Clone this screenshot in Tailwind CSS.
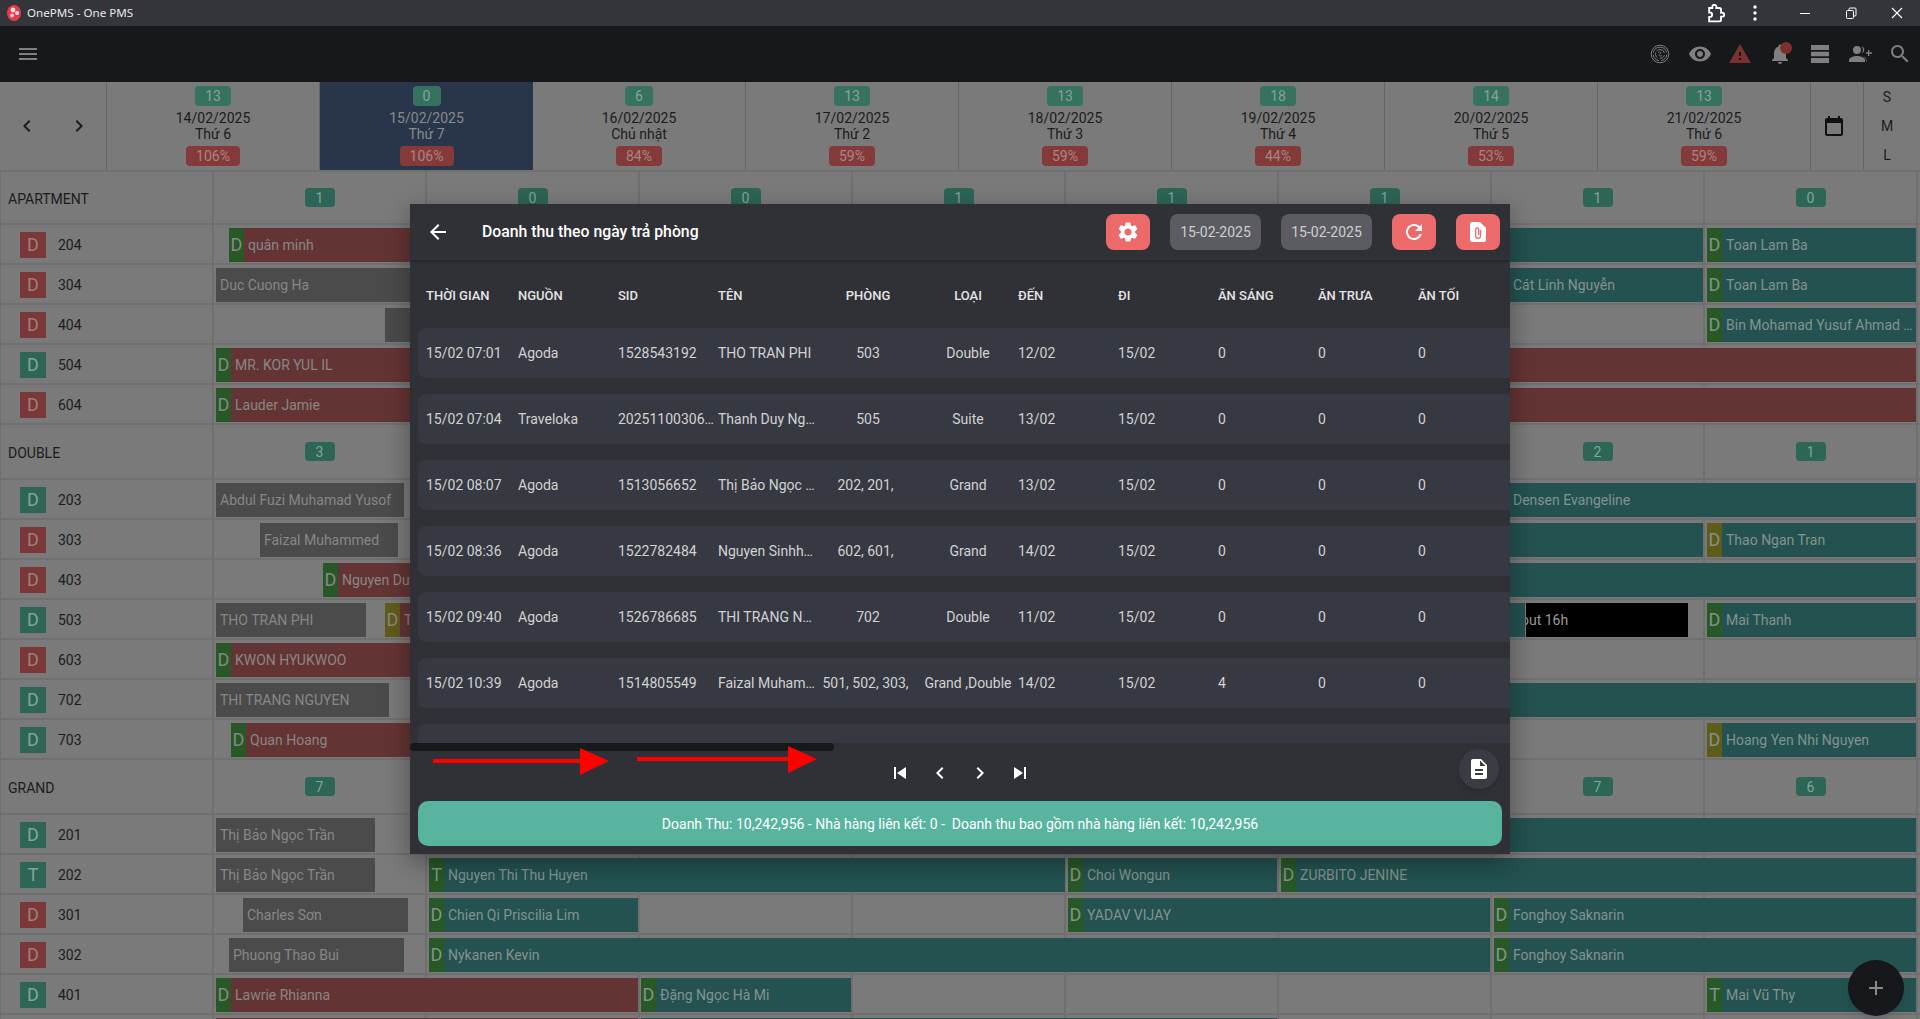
<!DOCTYPE html>
<html lang="vi">
<head>
<meta charset="utf-8">
<title>OnePMS - One PMS</title>
<script src="https://cdn.jsdelivr.net/npm/@tailwindcss/browser@4"></script>
</head>
<body class="m-0 bg-[#7a7a7a]">
<div class="relative w-[1920px] h-[1019px] overflow-hidden font-[Roboto,sans-serif] text-sm text-[#1c1c1c]">

  <!-- Title bar -->
  <div class="h-[26px] bg-[#33353b] flex items-center text-white">
    <svg class="ml-[7px] w-[14px] h-[16px]" viewBox="0 0 14 16"><ellipse cx="7" cy="8" rx="7" ry="8" fill="#e63950"/><circle cx="6" cy="5" r="2.400" fill="#fbd5db"/><circle cx="10" cy="8" r="2" fill="#fde8eb"/><circle cx="5" cy="10.500" r="2" fill="#f9c6cf"/></svg>
    <span class="ml-[6px] text-[11.6px] font-['Noto_Sans',sans-serif] text-[#e8e8e8]">OnePMS - One PMS</span>
    <svg class="absolute left-[1706px] top-[4px] w-[19px] h-[19px]" viewBox="0 0 24 24" fill="none" stroke="#fff" stroke-width="2.400"><path d="M20.500 11H19V7c0-1.100-.9-2-2-2h-4V3.500C13 2.120 11.880 1 10.500 1S8 2.120 8 3.500V5H4v5.800h1c1.490 0 2.700 1.210 2.700 2.700S6.490 16.200 5 16.200H4V22h13c1.100 0 2-.9 2-2v-4h1.500c1.380 0 2.500-1.120 2.500-2.500S21.880 11 20.500 11z"/></svg>
    <svg class="absolute left-[1745px] top-[3px] w-[20px] h-[20px]" viewBox="0 0 20 20" fill="#fff"><circle cx="10" cy="4" r="1.700"/><circle cx="10" cy="10" r="1.700"/><circle cx="10" cy="16" r="1.700"/></svg>
    <svg class="absolute left-[1795px] top-[3px] w-[20px] h-[20px]" viewBox="0 0 20 20" stroke="#fff" stroke-width="1"><path d="M5 10.500h10"/></svg>
    <svg class="absolute left-[1841px] top-[3px] w-[20px] h-[20px]" viewBox="0 0 20 20" stroke="#fff" stroke-width="1" fill="none"><rect x="5.500" y="7.500" width="7" height="8" rx="1"/><path d="M8 7.500V6a1 1 0 0 1 1-1h5a1 1 0 0 1 1 1v6a1 1 0 0 1-1 1h-1.500"/></svg>
    <svg class="absolute left-[1887px] top-[3px] w-[20px] h-[20px]" viewBox="0 0 20 20" stroke="#fff" stroke-width="1.100"><path d="M5 5l10 10M15 5L5 15"/></svg>
  </div>

  <!-- App bar -->
  <div class="h-14 bg-[#17181b] flex items-center justify-between pl-4 pr-2 text-[#7f7f7f]">
    <svg class="w-6 h-6" viewBox="0 0 24 24" fill="#7f7f7f"><path d="M3 18h18v-2H3v2zm0-5h18v-2H3v2zm0-7v2h18V6H3z"/></svg>
    <div class="flex items-center gap-4">
      <svg class="w-6 h-6" viewBox="0 0 24 24" fill="none" stroke="#7f7f7f" stroke-width="1"><circle cx="12" cy="12" r="8.800"/><path stroke-dasharray="9 2" d="M12 5.200a6.800 6.800 0 1 1-.01 0z"/><path stroke-dasharray="6 2" d="M12 7.500a4.500 4.500 0 1 1-.01 0z"/><path d="M10 10.500c2-1.500 4 0 2 1.500s0 3 2 1.500"/></svg>
      <svg class="w-6 h-6" viewBox="0 0 24 24" fill="#7f7f7f"><path d="M12 4.500C7 4.500 2.730 7.610 1 12c1.730 4.390 6 7.500 11 7.500s9.270-3.110 11-7.500c-1.730-4.390-6-7.500-11-7.500zM12 17c-2.760 0-5-2.240-5-5s2.240-5 5-5 5 2.240 5 5-2.240 5-5 5zm0-8c-1.660 0-3 1.340-3 3s1.340 3 3 3 3-1.340 3-3-1.340-3-3-3z"/></svg>
      <svg class="w-6 h-6" viewBox="0 0 24 24" fill="#7c3030"><path d="M1 21h22L12 2 1 21zm12-3h-2v-2h2v2zm0-4h-2v-4h2v4z"/></svg>
      <div class="relative w-6 h-6">
        <svg class="w-6 h-6" viewBox="0 0 24 24" fill="#7f7f7f"><path d="M12 22c1.100 0 2-.9 2-2h-4c0 1.100.89 2 2 2zm6-6v-5c0-3.070-1.640-5.640-4.500-6.320V4c0-.83-.67-1.500-1.500-1.500s-1.500.67-1.500 1.500v.68C7.630 5.360 6 7.920 6 11v5l-2 2v1h16v-1l-2-2z"/></svg>
        <span class="absolute left-[12px] top-0 w-3 h-3 rounded-full bg-[#7c3030]"></span>
      </div>
      <svg class="w-6 h-6" viewBox="0 0 24 24" fill="#7f7f7f"><path d="M3 3h18v5H3zM3 9.800h18v4.400H3zM3 16h18v5H3z"/></svg>
      <svg class="w-6 h-6" viewBox="0 0 24 24" fill="#7f7f7f"><circle cx="9" cy="8" r="4"/><path d="M1 20v-2c0-2.700 5.300-4 8-4s8 1.300 8 4v2z"/><path d="M13.500 4.200a4 4 0 0 1 0 7.600A6 6 0 0 0 13.500 4.200zM15 14.200c2 .6 3.500 1.800 3.500 3.800v2H18v-2c0-1.500-1.300-2.900-3-3.800z"/><path d="M20 8h1.400v2.300H24v1.400h-2.600V14H20v-2.300h-2v-1.400h2z"/></svg>
      <svg class="w-6 h-6" viewBox="0 0 24 24" fill="#7f7f7f"><path d="M15.500 14h-.79l-.28-.27C15.410 12.590 16 11.110 16 9.500 16 5.910 13.090 3 9.500 3S3 5.910 3 9.500 5.910 16 9.500 16c1.610 0 3.090-.59 4.230-1.570l.27.28v.79l5 4.990L20.490 19l-4.990-5zm-6 0C7.010 14 5 11.990 5 9.500S7.010 5 9.500 5 14 7.010 14 9.500 11.990 14 9.500 14z"/></svg>
    </div>
  </div>

  <!-- Date header -->
  <div class="h-[88px] grid grid-cols-[107px_repeat(8,213px)_53px_1fr] leading-4 bg-[#7a7a7a]">
    <div class="flex items-center justify-between px-[15px] border-r border-[#646464]">
      <svg class="w-6 h-6" viewBox="0 0 24 24" fill="#1c1c1c"><path d="M15.410 7.410L14 6l-6 6 6 6 1.410-1.410L10.830 12z"/></svg>
      <svg class="w-6 h-6" viewBox="0 0 24 24" fill="#1c1c1c"><path d="M10 6L8.590 7.410 13.170 12l-4.580 4.590L10 18l6-6z"/></svg>
    </div>
    <div class="flex flex-col items-center pt-1 border-r border-[#646464]"><span class="w-9 h-5 rounded bg-[#35725f] text-[#83a59a] flex items-center justify-center">13</span><span class="mt-[4px]">14/02/2025</span><span>Thứ 6</span><span class="mt-[4px] w-[54px] h-5 rounded bg-[#853a3a] text-[#a98585] flex items-center justify-center">106%</span></div>
    <div class="flex flex-col items-center pt-1 bg-[#28354a] text-[#8a8a8a]"><span class="w-7 h-5 rounded bg-[#35725f] text-[#83a59a] flex items-center justify-center">0</span><span class="mt-[4px]">15/02/2025</span><span>Thứ 7</span><span class="mt-[4px] w-[54px] h-5 rounded bg-[#853a3a] text-[#a98585] flex items-center justify-center">106%</span></div>
    <div class="flex flex-col items-center pt-1 border-r border-[#646464]"><span class="w-7 h-5 rounded bg-[#35725f] text-[#83a59a] flex items-center justify-center">6</span><span class="mt-[4px]">16/02/2025</span><span>Chủ nhật</span><span class="mt-[4px] w-[46px] h-5 rounded bg-[#853a3a] text-[#a98585] flex items-center justify-center">84%</span></div>
    <div class="flex flex-col items-center pt-1 border-r border-[#646464]"><span class="w-9 h-5 rounded bg-[#35725f] text-[#83a59a] flex items-center justify-center">13</span><span class="mt-[4px]">17/02/2025</span><span>Thứ 2</span><span class="mt-[4px] w-[46px] h-5 rounded bg-[#853a3a] text-[#a98585] flex items-center justify-center">59%</span></div>
    <div class="flex flex-col items-center pt-1 border-r border-[#646464]"><span class="w-9 h-5 rounded bg-[#35725f] text-[#83a59a] flex items-center justify-center">13</span><span class="mt-[4px]">18/02/2025</span><span>Thứ 3</span><span class="mt-[4px] w-[46px] h-5 rounded bg-[#853a3a] text-[#a98585] flex items-center justify-center">59%</span></div>
    <div class="flex flex-col items-center pt-1 border-r border-[#646464]"><span class="w-9 h-5 rounded bg-[#35725f] text-[#83a59a] flex items-center justify-center">18</span><span class="mt-[4px]">19/02/2025</span><span>Thứ 4</span><span class="mt-[4px] w-[46px] h-5 rounded bg-[#853a3a] text-[#a98585] flex items-center justify-center">44%</span></div>
    <div class="flex flex-col items-center pt-1 border-r border-[#646464]"><span class="w-9 h-5 rounded bg-[#35725f] text-[#83a59a] flex items-center justify-center">14</span><span class="mt-[4px]">20/02/2025</span><span>Thứ 5</span><span class="mt-[4px] w-[46px] h-5 rounded bg-[#853a3a] text-[#a98585] flex items-center justify-center">53%</span></div>
    <div class="flex flex-col items-center pt-1 border-r border-[#646464]"><span class="w-9 h-5 rounded bg-[#35725f] text-[#83a59a] flex items-center justify-center">13</span><span class="mt-[4px]">21/02/2025</span><span>Thứ 6</span><span class="mt-[4px] w-[46px] h-5 rounded bg-[#853a3a] text-[#a98585] flex items-center justify-center">59%</span></div>
    <div class="flex items-center pl-[11px] border-r border-[#646464]"><svg class="w-6 h-6" viewBox="0 0 24 24" fill="#111"><path d="M19 4h-1V2h-2v2H8V2H6v2H5c-1.110 0-2 .9-2 2v14c0 1.100.89 2 2 2h14c1.100 0 2-.9 2-2V6c0-1.100-.9-2-2-2zm0 16H5V9h14v11z"/></svg></div>
    <div class="flex flex-col items-center justify-between py-[7px] pr-[10px]"><span>S</span><span>M</span><span>L</span></div>
  </div>

  <!-- APARTMENT -->
  <div class="h-[55px] grid grid-cols-[213px_repeat(8,213px)] items-center border-t-2 border-b-2 border-[#707070] bg-[repeating-linear-gradient(90deg,#6f6f6f_0,#6f6f6f_1px,#7a7a7a_1px,#7a7a7a_212px,#6f6f6f_212px,#6f6f6f_213px)]">
    <span class="pl-2 pt-[2px]">APARTMENT</span>
    <span class="justify-self-center w-[30px] h-[19px] rounded bg-[#2d6557] text-[#83a59a] flex items-center justify-center">1</span><span class="justify-self-center w-[30px] h-[19px] rounded bg-[#2d6557] text-[#83a59a] flex items-center justify-center">0</span><span class="justify-self-center w-[30px] h-[19px] rounded bg-[#2d6557] text-[#83a59a] flex items-center justify-center">0</span><span class="justify-self-center w-[30px] h-[19px] rounded bg-[#2d6557] text-[#83a59a] flex items-center justify-center">1</span><span class="justify-self-center w-[30px] h-[19px] rounded bg-[#2d6557] text-[#83a59a] flex items-center justify-center">1</span><span class="justify-self-center w-[30px] h-[19px] rounded bg-[#2d6557] text-[#83a59a] flex items-center justify-center">1</span><span class="justify-self-center w-[30px] h-[19px] rounded bg-[#2d6557] text-[#83a59a] flex items-center justify-center">1</span><span class="justify-self-center w-[30px] h-[19px] rounded bg-[#2d6557] text-[#83a59a] flex items-center justify-center">0</span>
  </div>

  <!-- 204 -->
  <div class="relative h-10 pt-[2px] flex items-center pl-5 gap-3 border-b-2 border-[#707070] bg-[repeating-linear-gradient(90deg,#6f6f6f_0,#6f6f6f_1px,#7a7a7a_1px,#7a7a7a_212px,#6f6f6f_212px,#6f6f6f_213px)]">
    <span class="w-[26px] h-[26px] bg-[#7a3838] text-[#9c7f7f] text-lg flex items-center justify-center">D</span><span>204</span>
    <div class="absolute top-[3px] h-[34px] left-[229px] w-[400px] bg-[#643434] flex items-center overflow-hidden text-[#878787]"><span class="w-[15px] h-full bg-[#285826] flex items-center justify-center text-lg">D</span><span class="pl-1 whitespace-nowrap">quân minh</span></div>
    <div class="absolute top-[3px] h-[34px] left-[1400px] w-[303px] bg-[#235250]"></div>
    <div class="absolute top-[3px] h-[34px] left-[1707px] w-[209px] bg-[#235250] flex items-center overflow-hidden text-[#83928f]"><span class="w-[15px] h-full bg-[#285826] flex items-center justify-center text-lg">D</span><span class="pl-1 whitespace-nowrap">Toan Lam Ba</span></div>
  </div>
  <!-- 304 -->
  <div class="relative h-10 pt-[2px] flex items-center pl-5 gap-3 border-b-2 border-[#707070] bg-[repeating-linear-gradient(90deg,#6f6f6f_0,#6f6f6f_1px,#7a7a7a_1px,#7a7a7a_212px,#6f6f6f_212px,#6f6f6f_213px)]">
    <span class="w-[26px] h-[26px] bg-[#7a3838] text-[#9c7f7f] text-lg flex items-center justify-center">D</span><span>304</span>
    <div class="absolute top-[3px] h-[34px] left-[216px] w-[300px] bg-[#4b4b4b] flex items-center overflow-hidden text-[#878787]"><span class="pl-1 whitespace-nowrap">Duc Cuong Ha</span></div>
    <div class="absolute top-[3px] h-[34px] left-[1494px] w-[209px] bg-[#235250] flex items-center overflow-hidden text-[#83928f]"><span class="w-[15px] h-full bg-[#285826]"></span><span class="pl-1 whitespace-nowrap">Cát Linh Nguyễn</span></div>
    <div class="absolute top-[3px] h-[34px] left-[1707px] w-[209px] bg-[#235250] flex items-center overflow-hidden text-[#83928f]"><span class="w-[15px] h-full bg-[#285826] flex items-center justify-center text-lg">D</span><span class="pl-1 whitespace-nowrap">Toan Lam Ba</span></div>
  </div>
  <!-- 404 -->
  <div class="relative h-10 pt-[2px] flex items-center pl-5 gap-3 border-b-2 border-[#707070] bg-[repeating-linear-gradient(90deg,#6f6f6f_0,#6f6f6f_1px,#7a7a7a_1px,#7a7a7a_212px,#6f6f6f_212px,#6f6f6f_213px)]">
    <span class="w-[26px] h-[26px] bg-[#7a3838] text-[#9c7f7f] text-lg flex items-center justify-center">D</span><span>404</span>
    <div class="absolute top-[3px] h-[34px] left-[385px] w-[100px] bg-[#4b4b4b]"></div>
    <div class="absolute top-[3px] h-[34px] left-[1707px] w-[209px] bg-[#235250] flex items-center overflow-hidden text-[#83928f]"><span class="w-[15px] h-full shrink-0 bg-[#285826] flex items-center justify-center text-lg">D</span><span class="pl-1 pr-[3px] whitespace-nowrap">Bin Mohamad Yusuf Ahmad …</span></div>
  </div>
  <!-- 504 -->
  <div class="relative h-10 pt-[2px] flex items-center pl-5 gap-3 border-b-2 border-[#707070] bg-[repeating-linear-gradient(90deg,#6f6f6f_0,#6f6f6f_1px,#7a7a7a_1px,#7a7a7a_212px,#6f6f6f_212px,#6f6f6f_213px)]">
    <span class="w-[26px] h-[26px] bg-[#2d6557] text-[#83a59a] text-lg flex items-center justify-center">D</span><span>504</span>
    <div class="absolute top-[3px] h-[34px] left-[216px] w-[1700px] bg-[#643434] flex items-center overflow-hidden text-[#878787]"><span class="w-[15px] h-full bg-[#285826] flex items-center justify-center text-lg">D</span><span class="pl-1 whitespace-nowrap">MR. KOR YUL IL</span></div>
  </div>
  <!-- 604 -->
  <div class="relative h-10 pt-[2px] flex items-center pl-5 gap-3 border-b-2 border-[#707070] bg-[repeating-linear-gradient(90deg,#6f6f6f_0,#6f6f6f_1px,#7a7a7a_1px,#7a7a7a_212px,#6f6f6f_212px,#6f6f6f_213px)]">
    <span class="w-[26px] h-[26px] bg-[#7a3838] text-[#9c7f7f] text-lg flex items-center justify-center">D</span><span>604</span>
    <div class="absolute top-[3px] h-[34px] left-[216px] w-[1700px] bg-[#643434] flex items-center overflow-hidden text-[#878787]"><span class="w-[15px] h-full bg-[#285826] flex items-center justify-center text-lg">D</span><span class="pl-1 whitespace-nowrap">Lauder Jamie</span></div>
  </div>

  <!-- DOUBLE -->
  <div class="h-[55px] grid grid-cols-[213px_repeat(8,213px)] items-center border-b-2 border-[#707070] bg-[repeating-linear-gradient(90deg,#6f6f6f_0,#6f6f6f_1px,#7a7a7a_1px,#7a7a7a_212px,#6f6f6f_212px,#6f6f6f_213px)]">
    <span class="pl-2 pt-[2px]">DOUBLE</span>
    <span class="justify-self-center w-[30px] h-[19px] rounded bg-[#2d6557] text-[#83a59a] flex items-center justify-center">3</span><span></span><span></span><span></span><span></span><span></span><span class="justify-self-center w-[30px] h-[19px] rounded bg-[#2d6557] text-[#83a59a] flex items-center justify-center">2</span><span class="justify-self-center w-[30px] h-[19px] rounded bg-[#2d6557] text-[#83a59a] flex items-center justify-center">1</span>
  </div>

  <!-- 203 -->
  <div class="relative h-10 pt-[2px] flex items-center pl-5 gap-3 border-b-2 border-[#707070] bg-[repeating-linear-gradient(90deg,#6f6f6f_0,#6f6f6f_1px,#7a7a7a_1px,#7a7a7a_212px,#6f6f6f_212px,#6f6f6f_213px)]">
    <span class="w-[26px] h-[26px] bg-[#2d6557] text-[#83a59a] text-lg flex items-center justify-center">D</span><span>203</span>
    <div class="absolute top-[3px] h-[34px] left-[216px] w-[188px] bg-[#4b4b4b] flex items-center overflow-hidden text-[#878787]"><span class="pl-1 whitespace-nowrap">Abdul Fuzi Muhamad Yusof</span></div>
    <div class="absolute top-[3px] h-[34px] left-[1494px] w-[422px] bg-[#235250] flex items-center overflow-hidden text-[#83928f]"><span class="w-[15px] h-full bg-[#285826]"></span><span class="pl-1 whitespace-nowrap">Densen Evangeline</span></div>
  </div>
  <!-- 303 -->
  <div class="relative h-10 pt-[2px] flex items-center pl-5 gap-3 border-b-2 border-[#707070] bg-[repeating-linear-gradient(90deg,#6f6f6f_0,#6f6f6f_1px,#7a7a7a_1px,#7a7a7a_212px,#6f6f6f_212px,#6f6f6f_213px)]">
    <span class="w-[26px] h-[26px] bg-[#7a3838] text-[#9c7f7f] text-lg flex items-center justify-center">D</span><span>303</span>
    <div class="absolute top-[3px] h-[34px] left-[260px] w-[138px] bg-[#4b4b4b] flex items-center overflow-hidden text-[#878787]"><span class="pl-1 whitespace-nowrap">Faizal Muhammed</span></div>
    <div class="absolute top-[3px] h-[34px] left-[1400px] w-[303px] bg-[#235250]"></div>
    <div class="absolute top-[3px] h-[34px] left-[1707px] w-[209px] bg-[#235250] flex items-center overflow-hidden text-[#83928f]"><span class="w-[15px] h-full bg-[#5f5c1a] flex items-center justify-center text-lg">D</span><span class="pl-1 whitespace-nowrap">Thao Ngan Tran</span></div>
  </div>
  <!-- 403 -->
  <div class="relative h-10 pt-[2px] flex items-center pl-5 gap-3 border-b-2 border-[#707070] bg-[repeating-linear-gradient(90deg,#6f6f6f_0,#6f6f6f_1px,#7a7a7a_1px,#7a7a7a_212px,#6f6f6f_212px,#6f6f6f_213px)]">
    <span class="w-[26px] h-[26px] bg-[#7a3838] text-[#9c7f7f] text-lg flex items-center justify-center">D</span><span>403</span>
    <div class="absolute top-[3px] h-[34px] left-[323px] w-[300px] bg-[#643434] flex items-center overflow-hidden text-[#878787]"><span class="w-[15px] h-full bg-[#285826] flex items-center justify-center text-lg">D</span><span class="pl-1 whitespace-nowrap">Nguyen Duy Anh</span></div>
    <div class="absolute top-[3px] h-[34px] left-[1400px] w-[516px] bg-[#235250]"></div>
  </div>
  <!-- 503 -->
  <div class="relative h-10 pt-[2px] flex items-center pl-5 gap-3 border-b-2 border-[#707070] bg-[repeating-linear-gradient(90deg,#6f6f6f_0,#6f6f6f_1px,#7a7a7a_1px,#7a7a7a_212px,#6f6f6f_212px,#6f6f6f_213px)]">
    <span class="w-[26px] h-[26px] bg-[#2d6557] text-[#83a59a] text-lg flex items-center justify-center">D</span><span>503</span>
    <div class="absolute top-[3px] h-[34px] left-[216px] w-[150px] bg-[#4b4b4b] flex items-center overflow-hidden text-[#878787]"><span class="pl-1 whitespace-nowrap">THO TRAN PHI</span></div>
    <div class="absolute top-[3px] h-[34px] left-[385px] w-[200px] bg-[#643434] flex items-center overflow-hidden text-[#878787]"><span class="w-[15px] h-full bg-[#5f5c1a] flex items-center justify-center text-lg">D</span><span class="pl-1 whitespace-nowrap">THO TRAN PHI</span></div>
    <div class="absolute top-[3px] h-[34px] left-[1400px] w-[125px] bg-[#235250]"></div>
    <div class="absolute top-[3px] h-[34px] left-[1526px] w-[162px] bg-black flex items-center overflow-hidden text-[#9a9a9a]"><span class="-ml-[5px] whitespace-nowrap">out 16h</span></div>
    <div class="absolute top-[3px] h-[34px] left-[1707px] w-[209px] bg-[#235250] flex items-center overflow-hidden text-[#83928f]"><span class="w-[15px] h-full bg-[#285826] flex items-center justify-center text-lg">D</span><span class="pl-1 whitespace-nowrap">Mai Thanh</span></div>
  </div>
  <!-- 603 -->
  <div class="relative h-10 pt-[2px] flex items-center pl-5 gap-3 border-b-2 border-[#707070] bg-[repeating-linear-gradient(90deg,#6f6f6f_0,#6f6f6f_1px,#7a7a7a_1px,#7a7a7a_212px,#6f6f6f_212px,#6f6f6f_213px)]">
    <span class="w-[26px] h-[26px] bg-[#7a3838] text-[#9c7f7f] text-lg flex items-center justify-center">D</span><span>603</span>
    <div class="absolute top-[3px] h-[34px] left-[216px] w-[400px] bg-[#643434] flex items-center overflow-hidden text-[#878787]"><span class="w-[15px] h-full bg-[#285826] flex items-center justify-center text-lg">D</span><span class="pl-1 whitespace-nowrap">KWON HYUKWOO</span></div>
  </div>
  <!-- 702 -->
  <div class="relative h-10 pt-[2px] flex items-center pl-5 gap-3 border-b-2 border-[#707070] bg-[repeating-linear-gradient(90deg,#6f6f6f_0,#6f6f6f_1px,#7a7a7a_1px,#7a7a7a_212px,#6f6f6f_212px,#6f6f6f_213px)]">
    <span class="w-[26px] h-[26px] bg-[#2d6557] text-[#83a59a] text-lg flex items-center justify-center">D</span><span>702</span>
    <div class="absolute top-[3px] h-[34px] left-[216px] w-[173px] bg-[#4b4b4b] flex items-center overflow-hidden text-[#878787]"><span class="pl-1 whitespace-nowrap">THI TRANG NGUYEN</span></div>
    <div class="absolute top-[3px] h-[34px] left-[1400px] w-[516px] bg-[#235250]"></div>
  </div>
  <!-- 703 -->
  <div class="relative h-10 pt-[2px] flex items-center pl-5 gap-3 border-b-2 border-[#707070] bg-[repeating-linear-gradient(90deg,#6f6f6f_0,#6f6f6f_1px,#7a7a7a_1px,#7a7a7a_212px,#6f6f6f_212px,#6f6f6f_213px)]">
    <span class="w-[26px] h-[26px] bg-[#2d6557] text-[#83a59a] text-lg flex items-center justify-center">D</span><span>703</span>
    <div class="absolute top-[3px] h-[34px] left-[231px] w-[400px] bg-[#643434] flex items-center overflow-hidden text-[#878787]"><span class="w-[15px] h-full bg-[#285826] flex items-center justify-center text-lg">D</span><span class="pl-1 whitespace-nowrap">Quan Hoang</span></div>
    <div class="absolute top-[3px] h-[34px] left-[1707px] w-[209px] bg-[#235250] flex items-center overflow-hidden text-[#83928f]"><span class="w-[15px] h-full bg-[#5f5c1a] flex items-center justify-center text-lg">D</span><span class="pl-1 whitespace-nowrap">Hoang Yen Nhi Nguyen</span></div>
  </div>

  <!-- GRAND -->
  <div class="h-[55px] grid grid-cols-[213px_repeat(8,213px)] items-center border-b-2 border-[#707070] bg-[repeating-linear-gradient(90deg,#6f6f6f_0,#6f6f6f_1px,#7a7a7a_1px,#7a7a7a_212px,#6f6f6f_212px,#6f6f6f_213px)]">
    <span class="pl-2 pt-[2px]">GRAND</span>
    <span class="justify-self-center w-[30px] h-[19px] rounded bg-[#2d6557] text-[#83a59a] flex items-center justify-center">7</span><span></span><span></span><span></span><span></span><span></span><span class="justify-self-center w-[30px] h-[19px] rounded bg-[#2d6557] text-[#83a59a] flex items-center justify-center">7</span><span class="justify-self-center w-[30px] h-[19px] rounded bg-[#2d6557] text-[#83a59a] flex items-center justify-center">6</span>
  </div>

  <!-- 201 -->
  <div class="relative h-10 pt-[2px] flex items-center pl-5 gap-3 border-b-2 border-[#707070] bg-[repeating-linear-gradient(90deg,#6f6f6f_0,#6f6f6f_1px,#7a7a7a_1px,#7a7a7a_212px,#6f6f6f_212px,#6f6f6f_213px)]">
    <span class="w-[26px] h-[26px] bg-[#2d6557] text-[#83a59a] text-lg flex items-center justify-center">D</span><span>201</span>
    <div class="absolute top-[3px] h-[34px] left-[216px] w-[159px] bg-[#4b4b4b] flex items-center overflow-hidden text-[#878787]"><span class="pl-1 whitespace-nowrap">Thị Bảo Ngọc Trần</span></div>
    <div class="absolute top-[3px] h-[34px] left-[1400px] w-[516px] bg-[#235250]"></div>
  </div>
  <!-- 202 -->
  <div class="relative h-10 pt-[2px] flex items-center pl-5 gap-3 border-b-2 border-[#707070] bg-[repeating-linear-gradient(90deg,#6f6f6f_0,#6f6f6f_1px,#7a7a7a_1px,#7a7a7a_212px,#6f6f6f_212px,#6f6f6f_213px)]">
    <span class="w-[26px] h-[26px] bg-[#2d6557] text-[#83a59a] text-lg flex items-center justify-center">T</span><span>202</span>
    <div class="absolute top-[3px] h-[34px] left-[216px] w-[159px] bg-[#4b4b4b] flex items-center overflow-hidden text-[#878787]"><span class="pl-1 whitespace-nowrap">Thị Bảo Ngọc Trần</span></div>
    <div class="absolute top-[3px] h-[34px] left-[429px] w-[636px] bg-[#235250] flex items-center overflow-hidden text-[#83928f]"><span class="w-[15px] h-full bg-[#285826] flex items-center justify-center text-lg">T</span><span class="pl-1 whitespace-nowrap">Nguyen Thi Thu Huyen</span></div>
    <div class="absolute top-[3px] h-[34px] left-[1068px] w-[209px] bg-[#235250] flex items-center overflow-hidden text-[#83928f]"><span class="w-[15px] h-full bg-[#285826] flex items-center justify-center text-lg">D</span><span class="pl-1 whitespace-nowrap">Choi Wongun</span></div>
    <div class="absolute top-[3px] h-[34px] left-[1281px] w-[635px] bg-[#235250] flex items-center overflow-hidden text-[#83928f]"><span class="w-[15px] h-full bg-[#285826] flex items-center justify-center text-lg">D</span><span class="pl-1 whitespace-nowrap">ZURBITO JENINE</span></div>
  </div>
  <!-- 301 -->
  <div class="relative h-10 pt-[2px] flex items-center pl-5 gap-3 border-b-2 border-[#707070] bg-[repeating-linear-gradient(90deg,#6f6f6f_0,#6f6f6f_1px,#7a7a7a_1px,#7a7a7a_212px,#6f6f6f_212px,#6f6f6f_213px)]">
    <span class="w-[26px] h-[26px] bg-[#7a3838] text-[#9c7f7f] text-lg flex items-center justify-center">D</span><span>301</span>
    <div class="absolute top-[3px] h-[34px] left-[243px] w-[165px] bg-[#4b4b4b] flex items-center overflow-hidden text-[#878787]"><span class="pl-1 whitespace-nowrap">Charles Sơn</span></div>
    <div class="absolute top-[3px] h-[34px] left-[429px] w-[209px] bg-[#235250] flex items-center overflow-hidden text-[#83928f]"><span class="w-[15px] h-full bg-[#285826] flex items-center justify-center text-lg">D</span><span class="pl-1 whitespace-nowrap">Chien Qi Priscilia Lim</span></div>
    <div class="absolute top-[3px] h-[34px] left-[1068px] w-[422px] bg-[#235250] flex items-center overflow-hidden text-[#83928f]"><span class="w-[15px] h-full bg-[#285826] flex items-center justify-center text-lg">D</span><span class="pl-1 whitespace-nowrap">YADAV VIJAY</span></div>
    <div class="absolute top-[3px] h-[34px] left-[1494px] w-[422px] bg-[#235250] flex items-center overflow-hidden text-[#83928f]"><span class="w-[15px] h-full bg-[#285826] flex items-center justify-center text-lg">D</span><span class="pl-1 whitespace-nowrap">Fonghoy Saknarin</span></div>
  </div>
  <!-- 302 -->
  <div class="relative h-10 pt-[2px] flex items-center pl-5 gap-3 border-b-2 border-[#707070] bg-[repeating-linear-gradient(90deg,#6f6f6f_0,#6f6f6f_1px,#7a7a7a_1px,#7a7a7a_212px,#6f6f6f_212px,#6f6f6f_213px)]">
    <span class="w-[26px] h-[26px] bg-[#7a3838] text-[#9c7f7f] text-lg flex items-center justify-center">D</span><span>302</span>
    <div class="absolute top-[3px] h-[34px] left-[229px] w-[175px] bg-[#4b4b4b] flex items-center overflow-hidden text-[#878787]"><span class="pl-1 whitespace-nowrap">Phuong Thao Bui</span></div>
    <div class="absolute top-[3px] h-[34px] left-[429px] w-[1061px] bg-[#235250] flex items-center overflow-hidden text-[#83928f]"><span class="w-[15px] h-full bg-[#285826] flex items-center justify-center text-lg">D</span><span class="pl-1 whitespace-nowrap">Nykanen Kevin</span></div>
    <div class="absolute top-[3px] h-[34px] left-[1494px] w-[422px] bg-[#235250] flex items-center overflow-hidden text-[#83928f]"><span class="w-[15px] h-full bg-[#285826] flex items-center justify-center text-lg">D</span><span class="pl-1 whitespace-nowrap">Fonghoy Saknarin</span></div>
  </div>
  <!-- 401 -->
  <div class="relative h-10 pt-[2px] flex items-center pl-5 gap-3 border-b-2 border-[#707070] bg-[repeating-linear-gradient(90deg,#6f6f6f_0,#6f6f6f_1px,#7a7a7a_1px,#7a7a7a_212px,#6f6f6f_212px,#6f6f6f_213px)]">
    <span class="w-[26px] h-[26px] bg-[#2d6557] text-[#83a59a] text-lg flex items-center justify-center">D</span><span>401</span>
    <div class="absolute top-[3px] h-[34px] left-[216px] w-[422px] bg-[#643434] flex items-center overflow-hidden text-[#878787]"><span class="w-[15px] h-full bg-[#285826] flex items-center justify-center text-lg">D</span><span class="pl-1 whitespace-nowrap">Lawrie Rhianna</span></div>
    <div class="absolute top-[3px] h-[34px] left-[641px] w-[210px] bg-[#235250] flex items-center overflow-hidden text-[#83928f]"><span class="w-[15px] h-full bg-[#285826] flex items-center justify-center text-lg">D</span><span class="pl-1 whitespace-nowrap">Đặng Ngọc Hà Mi</span></div>
    <div class="absolute top-[3px] h-[34px] left-[1707px] w-[209px] bg-[#235250] flex items-center overflow-hidden text-[#83928f]"><span class="w-[15px] h-full bg-[#285826] flex items-center justify-center text-lg">T</span><span class="pl-1 whitespace-nowrap">Mai Vũ Thy</span></div>
  </div>
  <!-- next row, only its first pixel shows -->
  <div class="relative h-10 bg-[repeating-linear-gradient(90deg,#6f6f6f_0,#6f6f6f_1px,#7a7a7a_1px,#7a7a7a_212px,#6f6f6f_212px,#6f6f6f_213px)]">
    <div class="absolute top-[3px] h-[34px] left-[216px] w-[422px] bg-[#643434]"></div>
    <div class="absolute top-[3px] h-[34px] left-[641px] w-[636px] bg-[#235250]"></div>
  </div>

  <!-- Add button -->
  <button class="absolute left-[1848px] top-[960px] w-14 h-14 rounded-full bg-[#17181b] flex items-center justify-center shadow-lg">
    <svg class="w-6 h-6" viewBox="0 0 24 24" fill="#8a8a8a"><path d="M19 13h-6v6h-2v-6H5v-2h6V5h2v6h6v2z"/></svg>
  </button>

  <!-- Modal -->
  <div class="absolute left-[410px] top-[204px] w-[1100px] h-[650px] bg-[#303136] overflow-hidden shadow-[0_8px_24px_rgba(0,0,0,0.35)] flex flex-col text-[#d2d2d2]">
    <div class="h-14 shrink-0 flex items-center pl-4 pr-[10px] shadow-[0_1px_3px_rgba(0,0,0,0.3)]">
      <svg class="w-6 h-6" viewBox="0 0 24 24" fill="#fff"><path d="M20 11H7.830l5.590-5.590L12 4l-8 8 8 8 1.410-1.410L7.830 13H20v-2z"/></svg>
      <span class="ml-8 pt-px text-[15.8px] font-medium text-white">Doanh thu theo ngày trả phòng</span>
      <div class="ml-auto flex items-center gap-5">
        <button class="w-11 h-9 rounded-lg bg-[#ec6a6a] flex items-center justify-center"><svg class="w-6 h-6" viewBox="0 0 24 24" fill="#fff"><path d="M19.140 12.940c.04-.3.06-.61.06-.94 0-.32-.02-.64-.07-.94l2.030-1.580c.18-.14.23-.41.12-.61l-1.920-3.320c-.12-.22-.37-.29-.59-.22l-2.390.96c-.5-.38-1.030-.7-1.620-.94l-.36-2.540c-.04-.24-.24-.41-.48-.41h-3.840c-.24 0-.43.17-.47.41l-.36 2.540c-.59.24-1.130.57-1.620.94l-2.390-.96c-.22-.08-.47 0-.59.22L2.740 8.870c-.12.21-.08.47.12.61l2.030 1.580c-.05.3-.09.63-.09.94s.02.64.07.94l-2.030 1.580c-.18.14-.23.41-.12.61l1.920 3.320c.12.22.37.29.59.22l2.390-.96c.5.38 1.030.7 1.620.94l.36 2.540c.05.24.24.41.48.41h3.840c.24 0 .44-.17.47-.41l.36-2.540c.59-.24 1.130-.56 1.620-.94l2.390.96c.22.08.47 0 .59-.22l1.920-3.320c.12-.22.07-.47-.12-.61l-2.010-1.580zM12 15.600c-1.980 0-3.600-1.620-3.600-3.600s1.620-3.600 3.600-3.600 3.600 1.620 3.600 3.600-1.620 3.600-3.600 3.600z"/></svg></button>
        <span class="w-[91px] h-9 rounded-lg bg-[#5a5c62] flex items-center justify-center text-[#cfcfcf]">15-02-2025</span>
        <span class="w-[91px] h-9 rounded-lg bg-[#5a5c62] flex items-center justify-center text-[#cfcfcf]">15-02-2025</span>
        <button class="w-11 h-9 rounded-lg bg-[#ec6a6a] flex items-center justify-center"><svg class="w-6 h-6" viewBox="0 0 24 24" fill="#fff"><path d="M17.650 6.350C16.200 4.900 14.210 4 12 4c-4.420 0-7.990 3.580-7.990 8s3.570 8 7.990 8c3.730 0 6.840-2.550 7.730-6h-2.080c-.82 2.330-3.040 4-5.650 4-3.310 0-6-2.690-6-6s2.690-6 6-6c1.660 0 3.140.69 4.220 1.780L13 11h7V4l-2.350 2.350z"/></svg></button>
        <button class="w-11 h-9 rounded-lg bg-[#ec6a6a] flex items-center justify-center"><svg class="w-6 h-6" viewBox="0 0 24 24"><path fill="#fff" d="M14 2H6a2 2 0 0 0-2 2v16a2 2 0 0 0 2 2h12a2 2 0 0 0 2-2V8z"/><path fill="none" stroke="#ec6a6a" stroke-width="1.300" d="M14.500 10v6a2.400 2.400 0 0 1-4.800 0V9.500a1.500 1.500 0 0 1 3 0V15"/></svg></button>
      </div>
    </div>

    <div class="h-[68px] shrink-0 pl-4 pt-1 grid grid-cols-[92px_repeat(10,100px)] items-center text-[13px] font-medium text-[#e4e4e4]">
      <span>THỜI GIAN</span><span>NGUỒN</span><span>SID</span><span>TÊN</span><span class="text-center">PHÒNG</span><span class="text-center">LOẠI</span><span>ĐẾN</span><span>ĐI</span><span>ĂN SÁNG</span><span>ĂN TRƯA</span><span>ĂN TỐI</span>
    </div>

    <div class="h-[415px] shrink-0 pl-2 overflow-hidden flex flex-col gap-4">
      <div class="h-[50px] shrink-0 pl-2 rounded-l-lg bg-[#363942] grid grid-cols-[92px_repeat(10,100px)] items-center whitespace-nowrap"><span>15/02 07:01</span><span>Agoda</span><span>1528543192</span><span>THO TRAN PHI</span><span class="text-center">503</span><span class="text-center">Double</span><span>12/02</span><span>15/02</span><span>0</span><span>0</span><span>0</span></div>
      <div class="h-[50px] shrink-0 pl-2 rounded-l-lg bg-[#363942] grid grid-cols-[92px_repeat(10,100px)] items-center whitespace-nowrap"><span>15/02 07:04</span><span>Traveloka</span><span>20251100306…</span><span>Thanh Duy Ng…</span><span class="text-center">505</span><span class="text-center">Suite</span><span>13/02</span><span>15/02</span><span>0</span><span>0</span><span>0</span></div>
      <div class="h-[50px] shrink-0 pl-2 rounded-l-lg bg-[#363942] grid grid-cols-[92px_repeat(10,100px)] items-center whitespace-nowrap"><span>15/02 08:07</span><span>Agoda</span><span>1513056652</span><span>Thị Bảo Ngọc …</span><span class="text-center pr-[5px]">202, 201,</span><span class="text-center">Grand</span><span>13/02</span><span>15/02</span><span>0</span><span>0</span><span>0</span></div>
      <div class="h-[50px] shrink-0 pl-2 rounded-l-lg bg-[#363942] grid grid-cols-[92px_repeat(10,100px)] items-center whitespace-nowrap"><span>15/02 08:36</span><span>Agoda</span><span>1522782484</span><span>Nguyen Sinhh…</span><span class="text-center pr-[5px]">602, 601,</span><span class="text-center">Grand</span><span>14/02</span><span>15/02</span><span>0</span><span>0</span><span>0</span></div>
      <div class="h-[50px] shrink-0 pl-2 rounded-l-lg bg-[#363942] grid grid-cols-[92px_repeat(10,100px)] items-center whitespace-nowrap"><span>15/02 09:40</span><span>Agoda</span><span>1526786685</span><span>THI TRANG N…</span><span class="text-center">702</span><span class="text-center">Double</span><span>11/02</span><span>15/02</span><span>0</span><span>0</span><span>0</span></div>
      <div class="h-[50px] shrink-0 pl-2 rounded-l-lg bg-[#363942] grid grid-cols-[92px_repeat(10,100px)] items-center whitespace-nowrap"><span>15/02 10:39</span><span>Agoda</span><span>1514805549</span><span>Faizal Muham…</span><span class="text-center pr-[5px]">501, 502, 303,</span><span class="text-center">Grand ,Double</span><span>14/02</span><span>15/02</span><span>4</span><span>0</span><span>0</span></div>
      <div class="h-[50px] shrink-0 rounded-l-lg bg-[#363942]"></div>
    </div>

    <div class="relative h-[58px] shrink-0 flex justify-center items-start pt-[18px] gap-4">
      <span class="absolute left-0 top-0 w-[424px] h-2 rounded-full bg-[#17181b]"></span>
      <svg class="w-6 h-6" viewBox="0 0 24 24" fill="#fff"><path d="M18 6v12l-9-6zM6 6h2v12H6z"/></svg>
      <svg class="w-6 h-6" viewBox="0 0 24 24" fill="#fff"><path d="M15.410 7.410L14 6l-6 6 6 6 1.410-1.410L10.830 12z"/></svg>
      <svg class="w-6 h-6" viewBox="0 0 24 24" fill="#fff"><path d="M10 6L8.590 7.410 13.170 12l-4.580 4.590L10 18l6-6z"/></svg>
      <svg class="w-6 h-6" viewBox="0 0 24 24" fill="#fff"><path d="M6 6v12l9-6zM16 6h2v12h-2z"/></svg>
      <button class="absolute right-[11px] top-[6px] w-10 h-10 rounded-full bg-[#3a3c44] flex items-center justify-center shadow-md">
        <svg class="w-6 h-6" viewBox="0 0 24 24" fill="#fff"><path d="M14 2H6c-1.100 0-1.990.9-1.990 2L4 20c0 1.100.89 2 1.990 2H18c1.100 0 2-.9 2-2V8l-6-6zm2 16H8v-2h8v2zm0-4H8v-2h8v2zm-3-5V3.500L18.500 9H13z"/></svg>
      </button>
    </div>

    <div class="mx-2 h-[45px] shrink-0 rounded-[10px] bg-[#58b49f] flex items-center justify-center text-white">Doanh Thu: 10,242,956 - Nhà hàng liên kết: 0 -&nbsp; Doanh thu bao gồm nhà hàng liên kết: 10,242,956</div>
  </div>

  <!-- Red annotation arrows drawn over the screenshot -->
  <svg class="absolute left-[430px] top-[744px] w-[392px] h-[34px]" viewBox="0 0 392 34" fill="#ff0000">
    <path d="M3 15h147v4H3zM150 4l29 13-29 14z"/>
    <path d="M207 13h151v4H207zM358 2l29 13-29 14z"/>
  </svg>
</div>
</body>
</html>
